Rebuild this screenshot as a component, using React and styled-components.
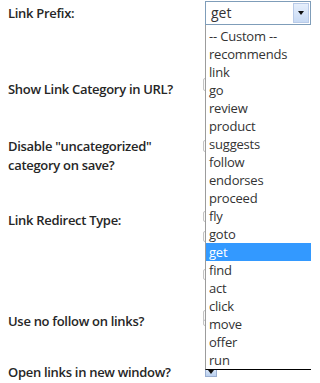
import React from 'react';
import styled, { createGlobalStyle } from 'styled-components';

const GlobalStyle = createGlobalStyle`
  html, body {
    margin: 0;
    padding: 0;
    background: #fff;
    overflow: hidden;
  }
  body {
    font-family: "Open Sans", "Liberation Sans", sans-serif;
  }
`;

const Page = styled.div`
  position: relative;
  width: 311px;
  height: 383px;
  padding-left: 8px;
  box-sizing: border-box;
  overflow: hidden;
`;

const Row = styled.div`
  display: grid;
  grid-template-columns: 197px 1fr;
  height: ${(p) => p.h}px;
`;

const Label = styled.div`
  padding-top: 4px;
  font-size: 13px;
  font-weight: 600;
  line-height: 19px;
  letter-spacing: -0.3px;
  color: #262626;
`;

const Control = styled.div`
  position: relative;
  padding-top: ${(p) => p.top || 0}px;
`;

// edge of a control hidden under the open list
const Peek = styled.div`
  width: 6px;
  height: ${(p) => p.h || 10}px;
  margin-top: ${(p) => p.top || 0}px;
  margin-left: -2px;
  border: 1px solid #c4c4c4;
  border-radius: 2px;
  background: #fafafa;
`;

const Select = styled.div`
  display: flex;
  align-items: stretch;
  width: 106px;
  height: 24px;
  box-sizing: border-box;
  border: 1px solid #7f9db9;
  background: #fff;
`;

const SelectValue = styled.span`
  flex: 1;
  padding-left: 5px;
  font-size: 14px;
  line-height: 21px;
  color: #333;
`;

const ArrowButton = styled.span`
  display: flex;
  align-items: center;
  justify-content: center;
  width: 16px;
  margin: 1px;
  box-sizing: border-box;
  border: 1px solid #b9cbe8;
  background: linear-gradient(#e6effc, #c8daf4);
`;

const Arrow = styled.span`
  width: 0;
  height: 0;
  border-left: 3.5px solid transparent;
  border-right: 3.5px solid transparent;
  border-top: 4px solid #111;
`;

const TinySelect = styled.div`
  display: flex;
  align-items: center;
  justify-content: center;
  width: 12px;
  height: 11px;
  box-sizing: border-box;
  border: 1px solid #9aaed0;
  background: linear-gradient(#e6effc, #b9cfee);
`;

const List = styled.ul`
  position: absolute;
  top: 25px;
  left: 205px;
  width: 112px;
  margin: 0;
  padding: 2px 0 0;
  list-style: none;
  background: #fff;
  border-left: 1px solid #9c9c9c;
  border-bottom: 1px solid #000;
  z-index: 2;
`;

const Item = styled.li`
  height: 18px;
  padding-left: 3px;
  font-size: 13px;
  line-height: 18px;
  letter-spacing: -0.2px;
  color: ${(p) => (p.active ? '#fff' : '#333')};
  background: ${(p) => (p.active ? '#3399ff' : 'transparent')};
`;

const options = [
  '-- Custom --', 'recommends', 'link', 'go', 'review', 'product', 'suggests',
  'follow', 'endorses', 'proceed', 'fly', 'goto', 'get', 'find', 'act',
  'click', 'move', 'offer', 'run',
];

export default function App() {
  const selected = 'get';
  return (
    <Page>
      <GlobalStyle />
      <Row h={76}>
        <Label>Link Prefix:</Label>
        <Control top={1}>
          <Select>
            <SelectValue>{selected}</SelectValue>
            <ArrowButton><Arrow /></ArrowButton>
          </Select>
        </Control>
      </Row>
      <Row h={57}>
        <Label>Show Link Category in URL?</Label>
        <Control>
          <Peek top={2} h={11} />
        </Control>
      </Row>
      <Row h={74}>
        <Label>Disable "uncategorized"<br />category on save?</Label>
        <Control>
          <Peek top={7} h={10} />
        </Control>
      </Row>
      <Row h={101}>
        <Label>Link Redirect Type:</Label>
        <Control>
          <Peek top={4} h={9} />
          <Peek top={9} h={9} />
          <Peek top={27} h={9} />
          <Peek top={34} h={10} />
        </Control>
      </Row>
      <Row h={51}>
        <Label>Use no follow on links?</Label>
        <Control>
          <Peek top={2} h={9} />
        </Control>
      </Row>
      <Row h={24}>
        <Label>Open links in new window?</Label>
        <Control top={7}>
          <TinySelect><Arrow /></TinySelect>
        </Control>
      </Row>
      <List>
        {options.map((o) => (
          <Item key={o} active={o === selected}>{o}</Item>
        ))}
      </List>
    </Page>
  );
}
